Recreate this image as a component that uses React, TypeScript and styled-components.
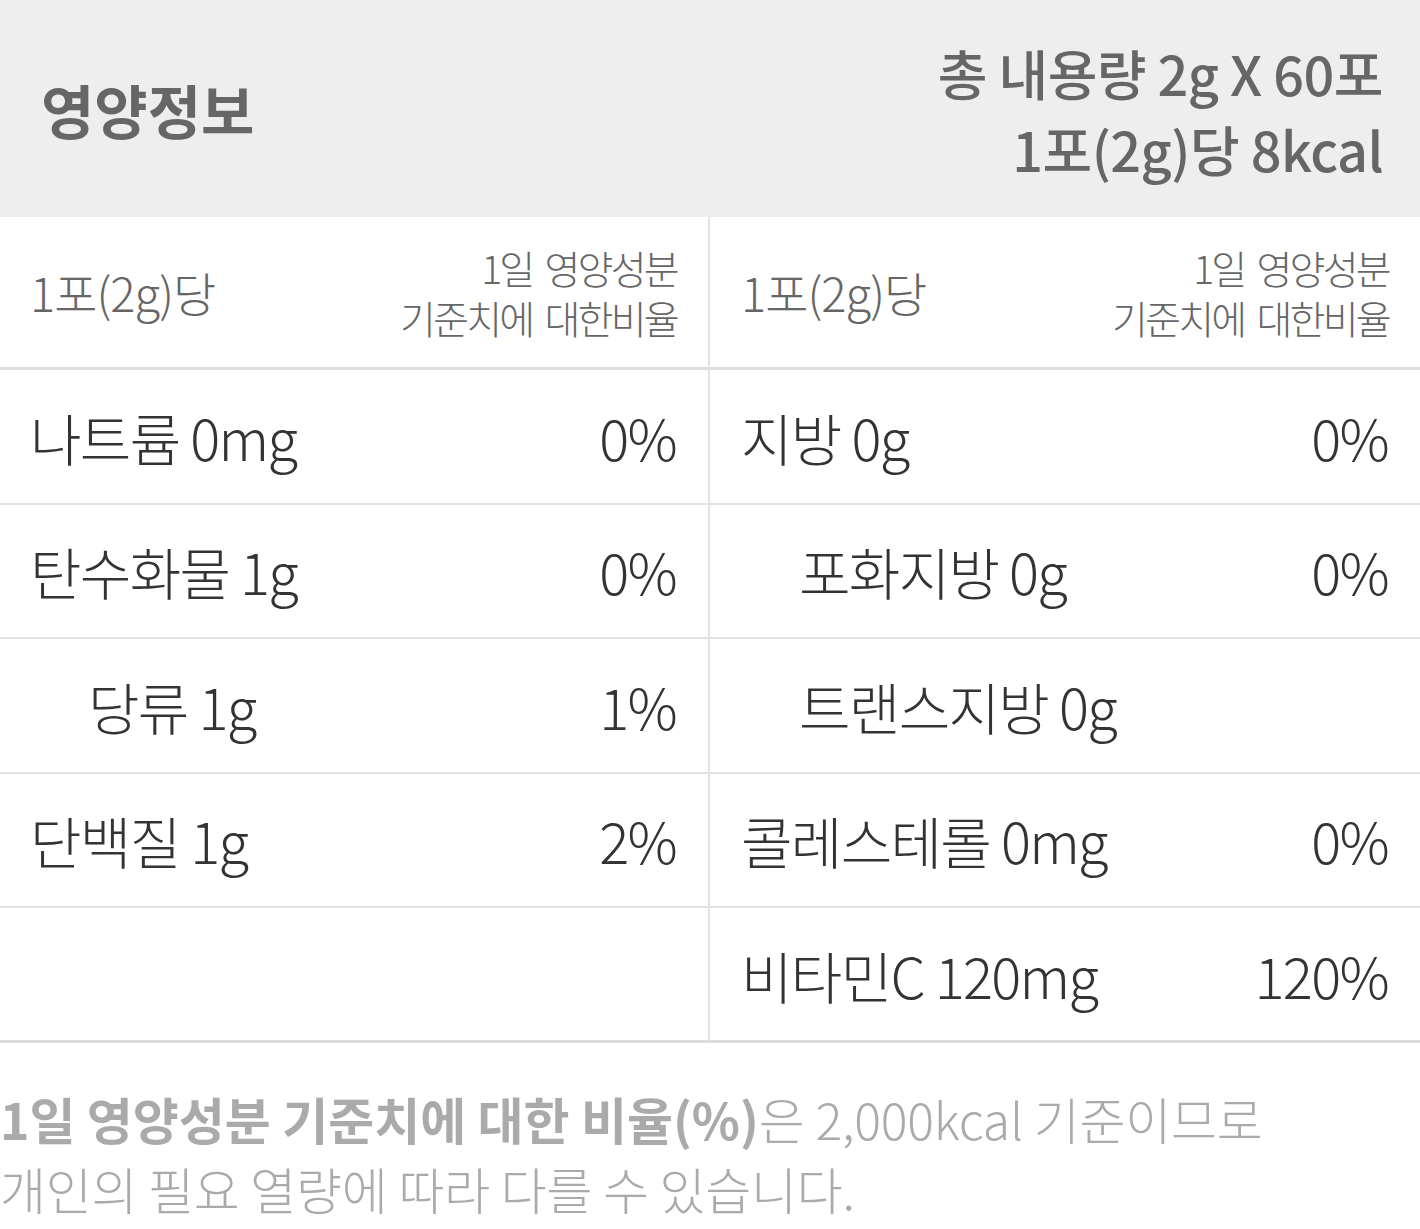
import React from "react";
import styled, { createGlobalStyle } from "styled-components";

const GlobalStyle = createGlobalStyle`
  html, body { margin: 0; padding: 0; background: #ffffff; }
  body { font-family: "Noto Sans CJK KR", "Noto Sans", sans-serif; }
`;

const Page = styled.div`
  width: 1420px;
  background: #fff;
`;

const Header = styled.header`
  height: 217px;
  box-sizing: border-box;
  background: #eeeeee;
  display: flex;
  align-items: center;
  justify-content: space-between;
  padding: 0 37px 0 41px;
`;

const Title = styled.h1`
  margin: 0;
  font-size: 58px;
  font-weight: 700;
  color: #666;
  line-height: 1;
`;

const Summary = styled.div`
  text-align: right;
  font-size: 54px;
  font-weight: 500;
  color: #666;
  line-height: 76px;
  letter-spacing: -0.01em;
  padding-top: 4px;
`;

const Table = styled.div`
  display: grid;
  grid-template-columns: 1fr 1fr;
`;

const Cell = styled.div<{ $left?: boolean; $head?: boolean; $last?: boolean }>`
  box-sizing: border-box;
  height: ${(p) => (p.$head ? "153px" : p.$last ? "135px" : "134.5px")};
  display: flex;
  align-items: center;
  justify-content: space-between;
  padding: 0 32px 0 ${(p) => (p.$left ? "30px" : "31px")};
  border-bottom: ${(p) => (p.$head || p.$last ? "3px solid #dcdcdc" : "2px solid #e2e2e2")};
  border-right: ${(p) => (p.$left ? "2px solid #e2e2e2" : "none")};
`;

const HeadLabel = styled.span`
  font-size: 47px;
  font-weight: 300;
  color: #666;
  letter-spacing: -0.02em;
  padding-bottom: 2px;
`;

const HeadNote = styled.div`
  display: flex;
  flex-direction: column;
  align-items: flex-end;
  margin-right: -1px;
`;

const NoteLine = styled.span`
  display: block;
  height: 50px;
  font-size: 39px;
  font-weight: 300;
  color: #666;
  line-height: 50px;
  letter-spacing: -0.07em;
  word-spacing: 6px;
  white-space: nowrap;
`;

const Name = styled.span<{ $indent?: boolean }>`
  font-size: 56px;
  font-weight: 300;
  color: #333;
  letter-spacing: -0.03em;
  padding-left: ${(p) => (p.$indent ? "58px" : "0")};
`;

const Value = styled.span`
  font-size: 56px;
  font-weight: 300;
  color: #333;
  letter-spacing: -0.03em;
`;

const Footer = styled.p`
  margin: 0;
  padding: 40px 0 0 0;
  font-size: 50px;
  font-weight: 300;
  color: #aaa;
  line-height: 70px;
  letter-spacing: -0.005em;
`;

const Strong = styled.strong`
  font-weight: 700;
  letter-spacing: 0;
`;

type Row = { name: string; value?: string; indent?: boolean } | null;

const left: Row[] = [
  { name: "나트륨 0mg", value: "0%" },
  { name: "탄수화물 1g", value: "0%" },
  { name: "당류 1g", value: "1%", indent: true },
  { name: "단백질 1g", value: "2%" },
  null,
];

const right: Row[] = [
  { name: "지방 0g", value: "0%" },
  { name: "포화지방 0g", value: "0%", indent: true },
  { name: "트랜스지방 0g", indent: true },
  { name: "콜레스테롤 0mg", value: "0%" },
  { name: "비타민C 120mg", value: "120%" },
];

function HeadCell({ isLeft }: { isLeft?: boolean }) {
  return (
    <Cell $left={isLeft} $head>
      <HeadLabel>1포(2g)당</HeadLabel>
      <HeadNote>
        <NoteLine>1일 영양성분</NoteLine>
        <NoteLine>기준치에 대한비율</NoteLine>
      </HeadNote>
    </Cell>
  );
}

export default function App() {
  return (
    <Page>
      <GlobalStyle />
      <Header>
        <Title>영양정보</Title>
        <Summary>
          총 내용량 2g X 60포
          <br />
          1포(2g)당 8kcal
        </Summary>
      </Header>
      <Table>
        <HeadCell isLeft />
        <HeadCell />
        {left.map((l, i) => {
          const r = right[i];
          const last = i === left.length - 1;
          return (
            <React.Fragment key={i}>
              <Cell $left $last={last}>
                {l && <Name $indent={l.indent}>{l.name}</Name>}
                {l && l.value && <Value>{l.value}</Value>}
              </Cell>
              <Cell $last={last}>
                {r && <Name $indent={r.indent}>{r.name}</Name>}
                {r && r.value && <Value>{r.value}</Value>}
              </Cell>
            </React.Fragment>
          );
        })}
      </Table>
      <Footer>
        <Strong>1일 영양성분 기준치에 대한 비율(%)</Strong>은 2,000kcal 기준이므로
        <br />
        개인의 필요 열량에 따라 다를 수 있습니다.
      </Footer>
    </Page>
  );
}
